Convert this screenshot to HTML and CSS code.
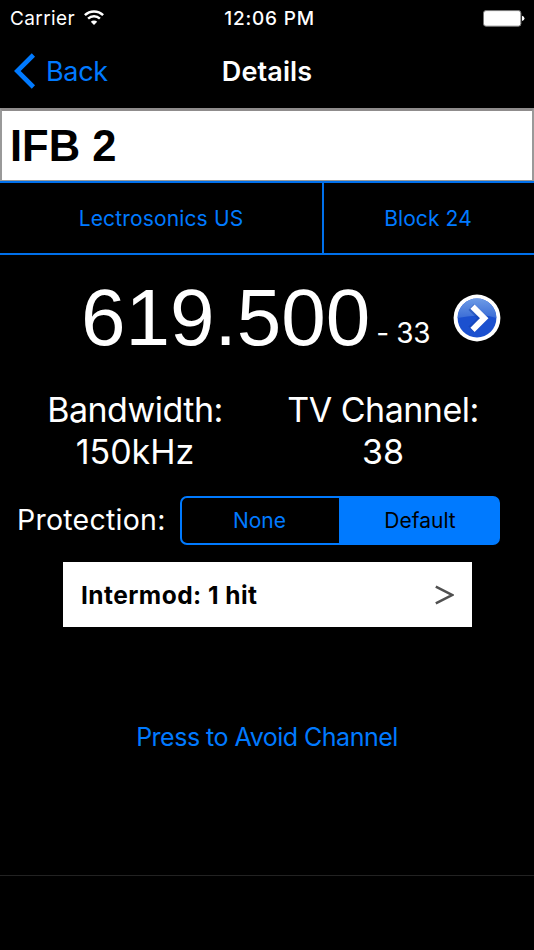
FILE: index.html
```html
<!DOCTYPE html>
<html lang="en">
<head>
  <meta charset="UTF-8">
  <meta name="viewport" content="width=device-width, initial-scale=1.0">
  <title>Details</title>
  <link rel="stylesheet" href="styles.css">
</head>
<body>
  <div class="screen">
    <div class="status-bar">
      <div class="status-left">
        <span class="carrier">Carrier</span>
        <svg class="wifi" width="20" height="15" viewBox="0 0 20 15" fill="none" stroke="#fff">
          <path d="M0.9 5.2 A13 13 0 0 1 19.1 5.2" stroke-width="2.5"/>
          <path d="M4.1 8.6 A8.4 8.4 0 0 1 15.9 8.6" stroke-width="2.4"/>
          <path d="M10 15 L6.8 11.7 A4.6 4.6 0 0 1 13.2 11.7 Z" fill="#fff" stroke="none"/>
        </svg>
      </div>
      <span class="clock">12:06 PM</span>
      <div class="status-right">
        <svg class="battery" width="42" height="17" viewBox="0 0 42 17">
          <rect x="0.5" y="0.6" width="37.4" height="15.6" rx="2.5" fill="#fff" stroke="#777"/>
          <path d="M39 5.8 Q41.5 6.6 41.5 8.4 Q41.5 10.3 39 11 Z" fill="#fff"/>
        </svg>
      </div>
    </div>

    <div class="nav-bar">
      <a class="back">
        <svg width="22" height="36" viewBox="0 0 22 36" fill="none">
          <path d="M19.4 2 L3.3 18 L19.4 34" stroke="#007aff" stroke-width="4.6"/>
        </svg>
        <span class="back-text">Back</span>
      </a>
      <span class="nav-title">Details</span>
    </div>

    <div class="name-field">IFB 2</div>

    <div class="pickers">
      <div class="picker brand"><span>Lectrosonics US</span></div>
      <div class="picker block"><span>Block 24</span></div>
    </div>

    <div class="frequency">
      <span class="freq-value">619.500</span>
      <span class="freq-step">- 33</span>
      <svg class="freq-go" width="48" height="48" viewBox="0 0 48 48">
        <defs>
          <linearGradient id="ball" x1="0" y1="0" x2="0" y2="1">
            <stop offset="0" stop-color="#6d9be6"/>
            <stop offset="1" stop-color="#3a6cd6"/>
          </linearGradient>
        </defs>
        <circle cx="24" cy="24" r="23.4" fill="#fff"/>
        <circle cx="24" cy="24" r="19.4" fill="#1b50cf"/>
        <path d="M4.6 24 A19.4 19.4 0 0 1 43.4 24 Q34 20.5 24 21.5 Q14 22 4.6 24 Z" fill="url(#ball)"/>
        <path d="M18.2 13 L30 24.2 L18.2 35.4" fill="none" stroke="#123fae" stroke-opacity="0.5" stroke-width="8"/>
        <path d="M19.5 12.6 L31.2 24.2 L19.5 35.8" fill="none" stroke="#fff" stroke-width="6"/>
      </svg>
    </div>

    <div class="info">
      <div class="info-item bandwidth">
        <div class="info-label">Bandwidth:</div>
        <div class="info-value">150kHz</div>
      </div>
      <div class="info-item channel">
        <div class="info-label">TV Channel:</div>
        <div class="info-value">38</div>
      </div>
    </div>

    <div class="protection">
      <span class="protection-label">Protection:</span>
      <div class="segmented">
        <div class="segment none"><span>None</span></div>
        <div class="segment default active"><span>Default</span></div>
      </div>
    </div>

    <div class="intermod">
      <span class="intermod-text">Intermod: 1 hit</span>
      <svg width="19" height="20" viewBox="0 0 19 20" fill="none">
        <path d="M0.8 1.7 L17 10 L0.8 18.3" stroke="#505050" stroke-width="2.5"/>
      </svg>
    </div>

    <div class="avoid"><span>Press to Avoid Channel</span></div>

    <div class="toolbar"></div>
  </div>
</body>
</html>
```
FILE: styles.css
```css
* {
  box-sizing: border-box;
}
body {
  font-family: Inter, 'Liberation Sans', sans-serif;
  background: #000;
  color: #fff;
  margin: 0;
}
.screen {
  width: 534px;
  height: 950px;
  display: flex;
  flex-direction: column;
  overflow: hidden;
  white-space: nowrap;
}
.status-bar {
  height: 38px;
  display: grid;
  grid-template-columns: 1fr auto 1fr;
  align-items: center;
  padding: 0 9px 0 10px;
  font-size: 19px;
  line-height: 24px;
}
.status-left {
  display: flex;
  align-items: center;
  gap: 9px;
}
.carrier {
  letter-spacing: 0.4px;
}
.wifi {
  margin-bottom: 4px;
}
.clock {
  font-weight: 500;
  letter-spacing: 0.8px;
  padding-left: 4px;
}
.status-right {
  display: flex;
  justify-content: flex-end;
}
.battery {
  margin-bottom: 2px;
}
.nav-bar {
  height: 70px;
  display: grid;
  grid-template-columns: 1fr auto 1fr;
  align-items: center;
  padding: 0 14px 4px;
  font-size: 27px;
}
.back {
  display: flex;
  align-items: center;
  gap: 10px;
  color: #007aff;
}
.back-text {
  letter-spacing: -0.3px;
}
.nav-title {
  font-weight: 600;
  letter-spacing: 0.1px;
}
.name-field {
  height: 73px;
  background: #fff;
  color: #000;
  border: 2px solid #999;
  border-top: 3px solid #8f8c8c;
  border-bottom-width: 1px;
  padding-left: 8px;
  font: bold 43.5px/70px 'Liberation Sans', Arial, sans-serif;
}
.pickers {
  height: 74px;
  display: flex;
  border-top: 2px solid #0070eb;
  border-bottom: 2px solid #0070eb;
  font-size: 21px;
  color: #007aff;
}
.picker {
  display: flex;
  align-items: center;
  justify-content: center;
}
.brand {
  width: 324px;
  border-right: 2px solid #0070eb;
  letter-spacing: 0.15px;
}
.block {
  flex: 1;
  padding-right: 2px;
  letter-spacing: 0.1px;
}
.frequency {
  height: 131px;
  display: flex;
  align-items: baseline;
  padding: 17px 33px 0 81px;
}
.freq-value {
  font: 80px/92px 'Liberation Sans', Arial, sans-serif;
}
.freq-step {
  font-size: 28px;
  letter-spacing: -0.3px;
  margin-left: 6px;
  transform: translateY(-2px);
}
.freq-go {
  margin-left: auto;
  align-self: flex-start;
  margin-top: 22px;
}
.info {
  height: 110px;
  display: flex;
  padding-top: 3px;
  font-size: 34px;
  line-height: 42px;
  text-align: center;
}
.info-item {
  width: 248px;
}
.info-label {
  letter-spacing: -0.5px;
}
.bandwidth {
  margin-left: 11px;
}
.protection {
  height: 50px;
  display: flex;
  align-items: center;
  justify-content: space-between;
  padding: 0 34px 1px 17px;
}
.protection-label {
  font-size: 28.5px;
  letter-spacing: 0.25px;
  padding-bottom: 3px;
}
.segmented {
  width: 320px;
  height: 49px;
  display: flex;
  border: 2px solid #007aff;
  border-radius: 7px;
  font-size: 21px;
  color: #007aff;
}
.segment {
  display: flex;
  align-items: center;
  justify-content: center;
}
.segment.none {
  width: 157px;
  padding-right: 2px;
}
.segment.default {
  flex: 1;
  padding-left: 3px;
}
.segment.active {
  background: #007aff;
  color: #000;
}
.intermod {
  width: 409px;
  height: 65px;
  margin: 16px 0 0 63px;
  padding: 0 18px;
  display: flex;
  align-items: center;
  justify-content: space-between;
  background: #fff;
  color: #000;
  font-size: 24.5px;
  font-weight: 700;
  letter-spacing: 0.45px;
}
.avoid {
  height: 40px;
  margin-top: 90px;
  text-align: center;
  font-size: 25px;
  line-height: 40px;
  letter-spacing: -0.5px;
  color: #007aff;
}
.toolbar {
  height: 75px;
  margin-top: auto;
  border-top: 1px solid #222;
}
```
